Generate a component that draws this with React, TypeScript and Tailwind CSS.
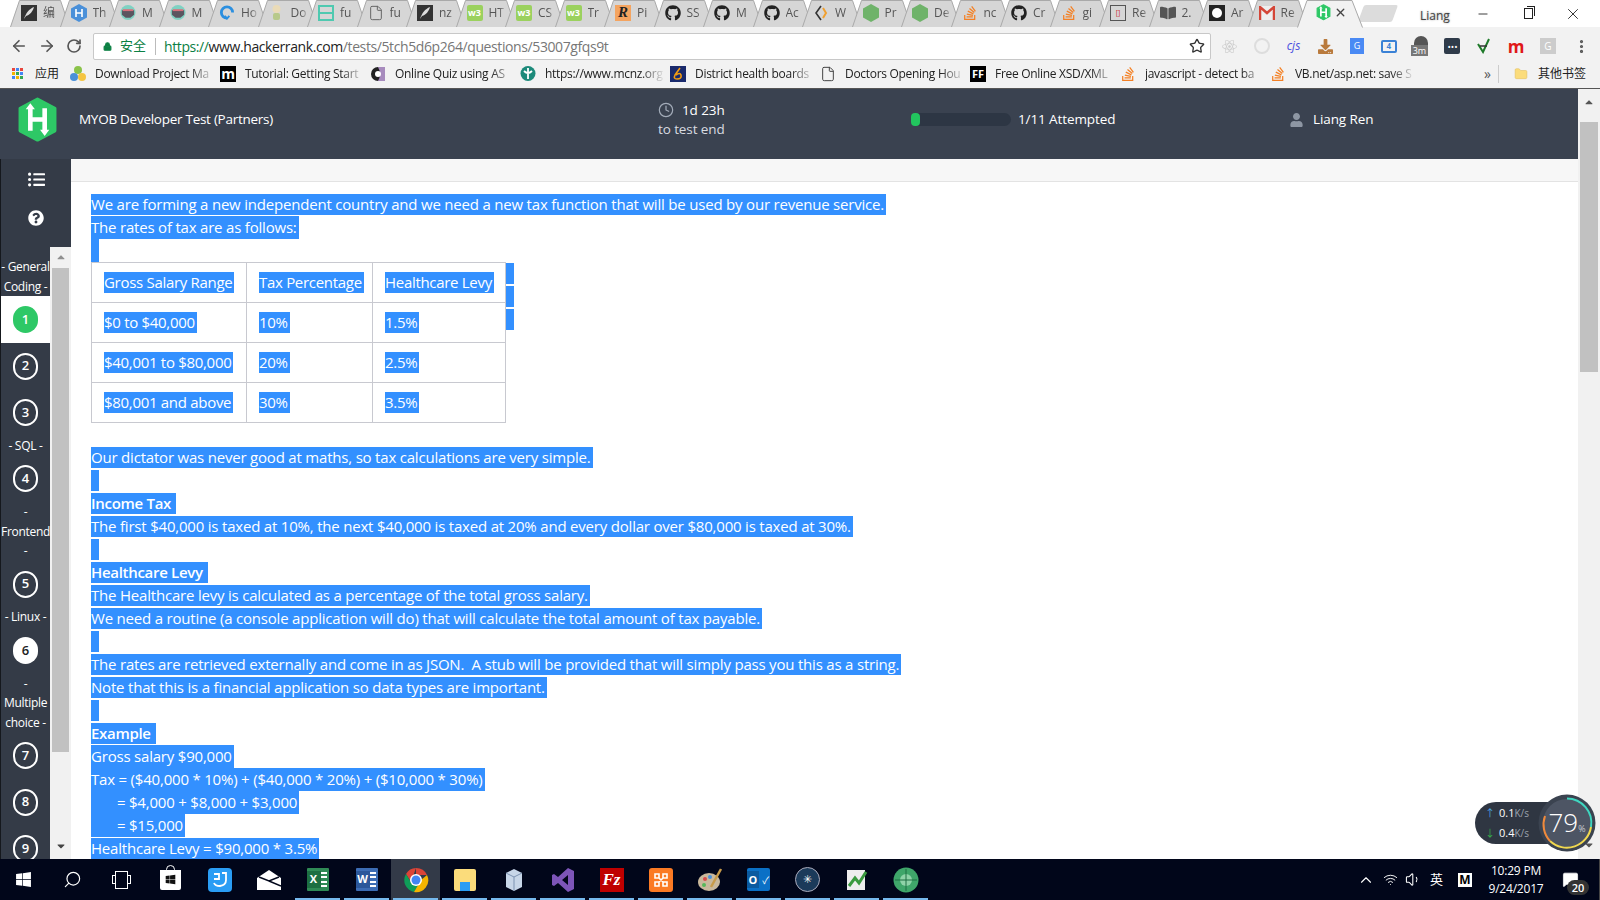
import type { ReactNode } from 'react';
import { ArrowLeft, ArrowRight, RotateCw, Star, Lock, EllipsisVertical, ChevronUp, Clock, Search, X, Minus, File, Folder, Volume1, Wifi, MessageSquare } from 'lucide-react';
import { FaGithub, FaStackOverflow, FaUser, FaWindows, FaQuestionCircle, FaListUl, FaReact, FaDownload, FaBookOpen, FaCaretUp, FaCaretDown } from 'react-icons/fa';

const SANS = "font-['Open_Sans','Noto_Sans_CJK_SC',sans-serif]";

function Box({ className, children }: { className: string; children?: ReactNode }) {
  return <span className={`flex h-4 w-4 shrink-0 items-center justify-center ${className}`}>{children}</span>;
}

function Hex({ size = 16 }: { size?: number }) {
  return (
    <svg width={size} height={size * 1.1} viewBox="0 0 40 44">
      <path d="M20 2 L37 11 V33 L20 42 L3 33 V11 Z" fill="#2ec866" stroke="#2ec866" strokeWidth="3" strokeLinejoin="round" />
      <path d="M13 11 V33 M27 11 V33 M13 22 H27" stroke="#fff" strokeWidth="4.5" fill="none" />
      <path d="M13 6 L8.500 12 H17.500 Z M27 38 L22.500 32 H31.500 Z" fill="#fff" />
    </svg>
  );
}

function Bird() {
  return (
    <Box className="bg-[#333]">
      <svg width="12" height="14" viewBox="0 0 12 14"><path d="M1 13 C3 7 6 3 11 1 C10 5 7 9 3 10 Z" fill="#ddd" /></svg>
    </Box>
  );
}

function Mask() {
  return (
    <svg width="17" height="17" viewBox="0 0 17 17">
      <circle cx="8.500" cy="8.500" r="8" fill="#7fd1c2" />
      <path d="M2 6 H15 V11 L11 14 H6 L2 11 Z" fill="#5b5560" />
      <path d="M3 5 H14 V7 H3 Z" fill="#d9707c" />
    </svg>
  );
}

function W3() {
  return <Box className="rounded-[2px] bg-[#9bd15e] text-[9px] font-bold leading-none text-white">w3</Box>;
}

function Node() {
  return (
    <svg width="16" height="18" viewBox="0 0 16 18"><path d="M8 0 L16 4.500 V13.500 L8 18 L0 13.500 V4.500 Z" fill="#6fb36a" /></svg>
  );
}

const tabs: [ReactNode, string][] = [
  [<Bird />, '编'],
  [<svg width="16" height="18" viewBox="0 0 16 18"><path d="M8 0 L16 4.500 V13.500 L8 18 L0 13.500 V4.500 Z" fill="#4a90d9" /><path d="M5 5 V13 M11 5 V13 M5 9 H11" stroke="#fff" strokeWidth="1.600" /></svg>, 'Th'],
  [<Mask />, 'M'],
  [<Mask />, 'M'],
  [<svg width="17" height="17" viewBox="0 0 17 17"><path d="M8.500 14.500 A6 6 0 1 1 14.500 8.500" stroke="#2b8fe0" strokeWidth="3" fill="none" /><path d="M6 12 L8.500 15 L11 12" stroke="#2b8fe0" strokeWidth="2" fill="none" /></svg>, 'Ho'],
  [<svg width="15" height="17" viewBox="0 0 15 17"><circle cx="7.500" cy="5" r="4" fill="#eadbb7" /><rect x="4" y="9" width="7" height="7" rx="2" fill="#b8c98a" /></svg>, 'Do'],
  [<span className="flex h-4 w-4 shrink-0 flex-col justify-center border-2 border-[#4fc9b0]"><span className="h-0.5 bg-[#4fc9b0]" /></span>, 'fu'],
  [<File className="h-4 w-4 shrink-0 text-[#666]" strokeWidth={1.500} />, 'fu'],
  [<Bird />, 'nz'],
  [<W3 />, 'HT'],
  [<W3 />, 'CS'],
  [<W3 />, 'Tr'],
  [<Box className="bg-[#f4a460] font-['Liberation_Serif',serif] text-[15px] font-bold italic leading-none text-[#222]">R</Box>, 'Pi'],
  [<FaGithub className="h-4 w-4 shrink-0 text-[#222]" />, 'SS'],
  [<FaGithub className="h-4 w-4 shrink-0 text-[#222]" />, 'M'],
  [<FaGithub className="h-4 w-4 shrink-0 text-[#222]" />, 'Ac'],
  [<svg width="16" height="16" viewBox="0 0 16 16"><path d="M8 1 L3 8 L8 15" stroke="#333" strokeWidth="1.600" fill="none" /><path d="M10 3 L13 8 L10 13" stroke="#f0a030" strokeWidth="2" fill="none" /></svg>, 'W'],
  [<Node />, 'Pr'],
  [<Node />, 'De'],
  [<FaStackOverflow className="h-4 w-4 shrink-0 text-[#f48024]" />, 'nc'],
  [<FaGithub className="h-4 w-4 shrink-0 text-[#222]" />, 'Cr'],
  [<FaStackOverflow className="h-4 w-4 shrink-0 text-[#f48024]" />, 'gi'],
  [<Box className="border border-[#555] text-[7px] leading-none text-[#c33]">[]</Box>, 'Re'],
  [<FaBookOpen className="h-4 w-4 shrink-0 text-[#555]" />, '2.'],
  [<Box className="bg-[#222]"><span className="h-2.5 w-2.5 rounded-full bg-white" /></Box>, 'Ar'],
  [<svg width="16" height="14" viewBox="0 0 16 14"><rect width="16" height="14" fill="#eee" /><path d="M1 14 V1 L8 7 L15 1 V14" stroke="#d44638" strokeWidth="2.500" fill="none" /></svg>, 'Re'],
];

const bookmarks: [ReactNode, string][] = [
  [<svg width="16" height="17" viewBox="0 0 16 17"><circle cx="8" cy="5" r="4" fill="#8bc34a" /><circle cx="4" cy="12" r="4" fill="#4a90d9" /><circle cx="12" cy="12" r="4" fill="#f5c542" /></svg>, 'Download Project Ma'],
  [<Box className="bg-black text-[14px] font-bold leading-none text-white">m</Box>, 'Tutorial: Getting Start'],
  [<svg width="16" height="16" viewBox="0 0 16 16"><circle cx="8" cy="8" r="7" fill="#222" /><path d="M8 1 H15 V15 H8 Q12 8 8 1 Z" fill="#a78bbd" /><circle cx="8" cy="8" r="3" fill="#fff" /></svg>, 'Online Quiz using AS'],
  [<svg width="16" height="17" viewBox="0 0 16 17"><circle cx="8" cy="8.500" r="7.500" fill="#1c8a7a" /><path d="M8 3 V14 M4 6 Q8 10 12 6" stroke="#fff" strokeWidth="1.800" fill="none" /></svg>, 'https://www.mcnz.org'],
  [<Box className="bg-[#1a2a6c]"><svg width="12" height="13" viewBox="0 0 12 13"><path d="M8 1 L3 8 Q1 12 5 12 Q10 12 9 8 Q8 5 4 8" stroke="#f39c12" strokeWidth="1.600" fill="none" /></svg></Box>, 'District health boards'],
  [<File className="h-4 w-4 shrink-0 text-[#444]" strokeWidth={1.500} />, 'Doctors Opening Hou'],
  [<Box className="gap-px bg-black text-[11px] font-bold leading-none text-white">FF</Box>, 'Free Online XSD/XML'],
  [<FaStackOverflow className="h-4 w-4 shrink-0 text-[#f48024]" />, 'javascript - detect ba'],
  [<FaStackOverflow className="h-4 w-4 shrink-0 text-[#f48024]" />, 'VB.net/asp.net: save S'],
];

function TabStrip() {
  return (
    <div className="relative flex h-[27px] shrink-0 bg-white pl-[10px]">
      {tabs.map(([icon, title], i) => (
        <div key={i} className="relative -mr-[10.500px] h-[27px] w-[60px] shrink-0">
          <svg className="absolute inset-0" width="60" height="27" viewBox="0 0 60 27">
            <path d="M0.500 27 L9.500 0.500 H50.500 L59.500 27" fill="#d6d6d6" stroke="#a9a9a9" />
          </svg>
          <div className="relative flex h-[27px] items-center pb-[2px] pl-[11px]">
            <span className="flex w-4 shrink-0 justify-center">{icon}</span>
            <span className="ml-[6px] w-[18px] overflow-hidden whitespace-nowrap text-[12px] text-[#555] [mask-image:linear-gradient(to_right,black_55%,transparent)]">{title}</span>
          </div>
        </div>
      ))}
      <div className="relative z-10 h-[27px] w-[66px] shrink-0">
        <svg className="absolute inset-0" width="66" height="28" viewBox="0 0 66 28">
          <path d="M0.500 27.500 L10 0.500 H55 L65.500 27.500" fill="#f2f2f2" stroke="#a9a9a9" />
        </svg>
        <div className="relative flex h-[27px] items-center pb-[2px] pl-[19px]">
          <Hex size={15} />
          <X className="ml-[3px] h-[13px] w-[13px] text-[#444]" strokeWidth={2.500} />
        </div>
      </div>
      <div className="-ml-[2px] mt-[5px] h-[17px] w-[34px] shrink-0 -skew-x-[20deg] rounded-[2px] bg-[#dcdcdc]" />
      <span className="ml-[25px] mt-[7px] text-[12px] leading-[18px] text-[#444] [text-shadow:0_0_2px_#999]">Liang</span>
      <div className="ml-[11px] flex">
        <span className="flex h-[27px] w-[45px] items-center justify-center"><Minus className="h-[14px] w-[14px] text-[#222]" strokeWidth={1.500} /></span>
        <span className="flex h-[27px] w-[45px] items-center justify-center">
          <span className="relative h-[11px] w-[9px] border border-[#222] after:absolute after:-right-[3px] after:-top-[3px] after:h-[10px] after:w-[8px] after:border-r after:border-t after:border-[#222]" />
        </span>
        <span className="flex h-[27px] w-[45px] items-center justify-center"><X className="h-[18px] w-[18px] text-[#222]" strokeWidth={1.200} /></span>
      </div>
    </div>
  );
}

function ExtIcon({ children }: { children: ReactNode }) {
  return <span className="flex h-[27px] w-[31.800px] shrink-0 items-center justify-center">{children}</span>;
}

function Toolbar() {
  return (
    <div className="flex h-[34px] shrink-0 items-center bg-[#f2f2f2] pt-[4px] text-[#555]">
      <div className="flex w-[93px] items-center pl-[10px]">
        <ArrowLeft className="h-[18px] w-[18px]" strokeWidth={2.200} />
        <ArrowRight className="ml-[10px] h-[18px] w-[18px]" strokeWidth={2.200} />
        <RotateCw className="ml-[10px] h-[16px] w-[16px]" strokeWidth={2.500} />
      </div>
      <div className="flex h-[27px] w-[1118px] items-center rounded-[2px] border border-[#c8c8c8] bg-white pl-[9px] pr-[5px] text-[14px]">
        <Lock className="h-[11px] w-[9px] fill-[#0b8043] text-[#0b8043]" strokeWidth={3} />
        <span className="ml-[8px] text-[13px] text-[#0b8043]">安全</span>
        <span className="ml-[9px] h-[17px] w-px bg-[#bbb]" />
        <span className="ml-[8px] flex-1 whitespace-nowrap tracking-[-0.4px]">
          <span className="text-[#0b8043]">https://</span>
          <span className="text-[#222]">www.hackerrank.com</span>
          <span className="text-[#777]">/tests/5tch5d6p264/questions/53007gfqs9t</span>
        </span>
        <Star className="h-4 w-4 text-[#333]" strokeWidth={2} />
      </div>
      <div className="ml-[3px] flex flex-1 items-center">
        <ExtIcon><FaReact className="h-[15px] w-[15px] text-[#ccc]" /></ExtIcon>
        <ExtIcon><span className="h-4 w-4 rounded-full border-2 border-[#ddd]" /></ExtIcon>
        <ExtIcon><span className="text-[12px] italic text-[#4b50e0]">cjs</span></ExtIcon>
        <ExtIcon><FaDownload className="h-[15px] w-[15px] text-[#b97a3c]" /></ExtIcon>
        <ExtIcon><span className="flex h-4 w-[14px] items-center justify-center bg-[#4a8af4] text-[9px] text-white">G</span></ExtIcon>
        <ExtIcon><span className="flex h-[13px] w-4 items-center justify-center rounded-[2px] border-2 border-[#3b82d6] text-[8px] font-bold leading-none text-[#3b82d6]">4</span></ExtIcon>
        <ExtIcon>
          <span className="relative block h-5 w-5">
            <span className="absolute left-[3px] top-0 h-[14px] w-[14px] rounded-t-full bg-[#555]" />
            <span className="absolute bottom-0 left-0 bg-[#777] px-[2px] text-[9px] leading-[11px] text-white">3m</span>
          </span>
        </ExtIcon>
        <ExtIcon><span className="flex h-4 w-4 items-center justify-center rounded-[2px] bg-[#2f3b4a] text-[9px] leading-none text-white">•••</span></ExtIcon>
        <ExtIcon><svg width="14" height="16" viewBox="0 0 14 16"><path d="M1 6 L6 14 L12 1" stroke="#1f7a2a" strokeWidth="2" fill="none" /><path d="M3 8 H10" stroke="#333" strokeWidth="1.500" /></svg></ExtIcon>
        <ExtIcon><span className="text-[17px] font-bold leading-none text-[#e01818]">m</span></ExtIcon>
        <ExtIcon><span className="flex h-4 w-4 items-center justify-center bg-[#ccc] text-[10px] text-white">G</span></ExtIcon>
        <EllipsisVertical className="ml-[9px] h-[17px] w-[17px] text-[#555]" strokeWidth={2.500} />
      </div>
    </div>
  );
}

function BookmarkBar() {
  return (
    <div className="flex h-[28px] shrink-0 items-center border-b border-[#555] bg-[#f2f2f2] pb-[2px] text-[12px] text-[#222]">
      <div className="ml-[12px] grid w-[11px] grid-cols-3 gap-[1px]">
        {['#e8453c', '#4285f4', '#e8453c', '#f4b400', '#34a853', '#4285f4', '#4285f4', '#f4b400', '#34a853'].map((c, i) => (
          <span key={i} className="h-[3px] w-[3px]" style={{ backgroundColor: c }} />
        ))}
      </div>
      <span className="ml-[12px] w-[35px] shrink-0">应用</span>
      {bookmarks.map(([icon, label], i) => (
        <div key={i} className="flex w-[150px] shrink-0 items-center">
          <span className="flex w-4 shrink-0 justify-center">{icon}</span>
          <span className="ml-[9px] w-[120px] overflow-hidden whitespace-nowrap tracking-[-0.3px] [mask-image:linear-gradient(to_right,black_80%,transparent)]">{label}</span>
        </div>
      ))}
      <span className="ml-[64px] w-[14px] shrink-0 text-[14px] leading-none text-[#555]">»</span>
      <span className="h-[18px] w-px shrink-0 bg-[#ccc]" />
      <Folder className="ml-[15px] h-[16px] w-[14px] shrink-0 fill-[#fbdc7b] text-[#e3c05c]" strokeWidth={1} />
      <span className="ml-[10px] whitespace-nowrap">其他书签</span>
    </div>
  );
}

function Header() {
  return (
    <div className="flex h-[70px] shrink-0 items-center bg-[#3a4250] pb-[9px] text-[13.500px] text-white">
      <div className="ml-[17px] shrink-0"><Hex size={41} /></div>
      <span className="ml-[21px] w-[579px] shrink-0 tracking-[-0.27px]">MYOB Developer Test (Partners)</span>
      <div className="w-[253px] shrink-0 leading-[19px]">
        <div className="flex items-center">
          <Clock className="h-4 w-4 text-[#a3acb9]" strokeWidth={1.800} />
          <span className="ml-[8px] tracking-[-0.1px]">1d 23h</span>
        </div>
        <div className="tracking-[-0.1px] text-[#d8dbe0]">to test end</div>
      </div>
      <div className="relative h-[13px] w-[100px] shrink-0 rounded-full bg-[#2d3644]">
        <div className="h-[13px] w-[9px] rounded-[4px] bg-[#22c55e]" />
      </div>
      <span className="ml-[7px] w-[271px] shrink-0 tracking-[-0.1px]">1/11 Attempted</span>
      <FaUser className="h-[14px] w-[15px] shrink-0 text-[#8d96a3]" />
      <span className="ml-[9px] tracking-[-0.1px]">Liang Ren</span>
    </div>
  );
}

type Step = { label: string[] } | { n: number; state?: 'current' | 'done' };

const steps: Step[] = [
  { label: ['- General', 'Coding -'] },
  { n: 1, state: 'current' },
  { n: 2 },
  { n: 3 },
  { label: ['- SQL -'] },
  { n: 4 },
  { label: ['-', 'Frontend', '-'] },
  { n: 5 },
  { label: ['- Linux -'] },
  { n: 6, state: 'done' },
  { label: ['-', 'Multiple', 'choice -'] },
  { n: 7 },
  { n: 8 },
  { n: 9 },
];

function Sidebar() {
  return (
    <div className="flex w-[71px] shrink-0 flex-col overflow-hidden border-l border-[#15181d] bg-[#343b47]">
      <div className="flex h-[88px] shrink-0 flex-col items-center gap-[22px] pt-[12px] text-white">
        <FaListUl className="h-[17px] w-[17px]" />
        <FaQuestionCircle className="h-[16px] w-[16px]" />
      </div>
      <div className="flex min-h-0 flex-1">
        <div className="w-[49px] shrink-0 overflow-hidden pt-[10px] text-center text-[12px] leading-[19.500px] text-white">
          {steps.map((s, i) =>
            'label' in s ? (
              <div key={i}>
                {s.label.map((l, j) => (
                  <div key={j} className="whitespace-nowrap tracking-[-0.3px]">{l}</div>
                ))}
              </div>
            ) : (
              <div key={i} className={`flex h-[46.700px] items-center justify-center ${s.state === 'current' ? 'bg-white' : ''}`}>
                <span
                  className={`flex h-[27px] w-[25px] items-center justify-center rounded-full text-[13px] font-semibold ${
                    s.state === 'current' ? 'bg-[#2ec866] text-white' : s.state === 'done' ? 'bg-white text-[#222]' : 'border-2 border-white text-white'
                  }`}
                >
                  {s.n}
                </span>
              </div>
            ),
          )}
        </div>
        <div className="flex w-[21px] shrink-0 flex-col items-center bg-[#f1f1f1] text-[#8f8f8f]">
          <FaCaretUp className="mt-[4px] h-[12px] w-[12px] shrink-0" />
          <div className="mt-[5px] h-[484px] w-[17px] shrink-0 bg-[#c1c1c1]" />
          <FaCaretDown className="mt-[88px] h-[12px] w-[12px] shrink-0 text-[#444]" />
        </div>
      </div>
    </div>
  );
}

function Sel({ children, className = '' }: { children?: ReactNode; className?: string }) {
  return <span className={`inline-block whitespace-pre bg-[#3390ff] pr-[2px] align-top text-white ${className}`}>{children}</span>;
}

// the browser's selection paint is not even: some lines fill the whole line box
function Line({ children, bold, tall }: { children?: ReactNode; bold?: boolean; tall?: boolean }) {
  const size = tall ? 'h-[23px] leading-[23px]' : 'h-[21px] leading-[21px]';
  return (
    <div className={`h-[23px] ${tall ? '' : 'pt-px'}`}>
      {children ? (
        <Sel className={`${size} ${bold ? 'pr-[5px] font-semibold tracking-[-0.3px]' : ''}`}>{children}</Sel>
      ) : (
        <Sel className={`${size} w-[8px]`} />
      )}
    </div>
  );
}

const taxRows = [
  ['Gross Salary Range', 'Tax Percentage', 'Healthcare Levy'],
  ['$0 to $40,000', '10%', '1.5%'],
  ['$40,001 to $80,000', '20%', '2.5%'],
  ['$80,001 and above', '30%', '3.5%'],
];

function Article() {
  return (
    <div className="min-h-0 flex-1 overflow-hidden pl-[20px] pt-[10.500px] text-[15px] tracking-[-0.2px]">
      <Line>We are forming a new independent country and we need a new tax function that will be used by our revenue service.</Line>
      <Line tall>The rates of tax are as follows:</Line>
      <Line tall />
      <div className="flex items-start">
        <table className="w-[414px] table-fixed border-collapse tracking-[-0.3px]">
          <colgroup>
            <col className="w-[155px]" />
            <col className="w-[126px]" />
            <col className="w-[133px]" />
          </colgroup>
          <tbody>
            {taxRows.map((row) => (
              <tr key={row[0]} className="h-[40px]">
                {row.map((c) => (
                  <td key={c} className="border border-[#c8c9d0] px-[12px] pb-0 pt-[2px] align-middle">
                    <Sel className="h-[21px] leading-[21px]">{c}</Sel>
                  </td>
                ))}
              </tr>
            ))}
          </tbody>
        </table>
        <div className="flex flex-col gap-[2px] pt-px">
          <span className="h-[21px] w-[8px] bg-[#3390ff]" />
          <span className="h-[21px] w-[8px] bg-[#3390ff]" />
          <span className="h-[21px] w-[8px] bg-[#3390ff]" />
        </div>
      </div>
      <div className="mt-[23px]">
        <Line>Our dictator was never good at maths, so tax calculations are very simple.</Line>
        <Line />
        <Line bold>Income Tax</Line>
        <Line>The first $40,000 is taxed at 10%, the next $40,000 is taxed at 20% and every dollar over $80,000 is taxed at 30%.</Line>
        <Line />
        <Line bold>Healthcare Levy</Line>
        <Line>The Healthcare levy is calculated as a percentage of the total gross salary.</Line>
        <Line>We need a routine (a console application will do) that will calculate the total amount of tax payable.</Line>
        <Line />
        <Line>The rates are retrieved externally and come in as JSON.  A stub will be provided that will simply pass you this as a string.</Line>
        <Line>Note that this is a financial application so data types are important.</Line>
        <Line />
        <Line bold>Example</Line>
        <Line tall>Gross salary $90,000</Line>
        <Line tall>Tax = ($40,000 * 10%) + ($40,000 * 20%) + ($10,000 * 30%)</Line>
        <Line tall>       = $4,000 + $8,000 + $3,000</Line>
        <Line tall>       = $15,000</Line>
        <Line>Healthcare Levy = $90,000 * 3.5%</Line>
      </div>
    </div>
  );
}

function Chrome() {
  return (
    <svg width="26" height="26" viewBox="0 0 26 26">
      <path d="M13 1 A12 12 0 0 1 24 8 H13 Z M13 1 A12 12 0 0 0 3 7 L8 15 Z" fill="#db4437" />
      <path d="M3 7 A12 12 0 0 0 11 25 L16 17 H9 Z" fill="#0f9d58" />
      <path d="M24 8 A12 12 0 0 1 11 25 L18 13 Z" fill="#f4b400" />
      <circle cx="13" cy="13" r="6" fill="#fff" />
      <circle cx="13" cy="13" r="4.500" fill="#4285f4" />
    </svg>
  );
}

function OfficeIcon({ letter, dark, light }: { letter: string; dark: string; light: string }) {
  return (
    <span className="relative flex h-[23px] w-[22px] items-center justify-end rounded-[1px]" style={{ backgroundColor: light }}>
      <span className="mr-[2px] flex h-[15px] w-[6px] flex-col justify-between">
        <span className="h-[2px] bg-white" />
        <span className="h-[2px] bg-white" />
        <span className="h-[2px] bg-white" />
        <span className="h-[2px] bg-white" />
      </span>
      <span className="absolute left-0 top-[3px] flex h-[17px] w-[14px] items-center justify-center text-[11px] font-bold text-white" style={{ backgroundColor: dark }}>{letter}</span>
    </span>
  );
}

const taskIcons: { icon: ReactNode; run?: boolean; active?: boolean }[] = [
  { icon: <FaWindows className="h-[17px] w-[17px] text-white" /> },
  { icon: <Search className="h-[19px] w-[19px] -scale-x-100 text-white" strokeWidth={1.500} /> },
  { icon: <span className="flex items-center text-white"><span className="h-[9px] w-[3px] border-y border-l border-white" /><span className="h-[18px] w-[13px] border border-white" /><span className="h-[9px] w-[3px] border-y border-r border-white" /></span> },
  { icon: <span className="relative flex h-[20px] w-[21px] items-center justify-center rounded-b-[2px] bg-white before:absolute before:-top-[5px] before:left-[6px] before:h-[6px] before:w-[9px] before:rounded-t-full before:border before:border-white"><FaWindows className="h-[11px] w-[11px] text-[#111]" /></span> },
  { icon: <span className="flex h-6 w-6 items-center justify-center rounded-[4px] bg-[#2a9df4]"><svg width="18" height="18" viewBox="0 0 18 18"><path d="M3 3 H8 V8 H3 M11 2 H15 V9 Q15 14 9 15 Q4 15 3 12" stroke="#fff" strokeWidth="1.800" fill="none" /></svg></span> },
  { icon: <svg width="24" height="20" viewBox="0 0 24 20"><path d="M0 8 L12 0 L24 8 V20 H0 Z" fill="#fff" /><path d="M2 7 L12 11 L22 7 M12 11 L24 16" stroke="#01061a" strokeWidth="1.500" fill="none" /></svg> },
  { icon: <OfficeIcon letter="X" dark="#1d6f42" light="#2f8a55" />, run: true },
  { icon: <OfficeIcon letter="W" dark="#2b579a" light="#3c6cb4" />, run: true },
  { icon: <Chrome />, run: true, active: true },
  { icon: <span className="relative block h-[22px] w-[22px] rounded-[2px] bg-[#fbdc7b]"><span className="absolute bottom-0 left-[6px] h-[9px] w-[10px] bg-[#2a9df4]" /></span>, run: true },
  { icon: <svg width="18" height="24" viewBox="0 0 18 24"><path d="M1 5 L9 1 L17 5 V19 L9 23 L1 19 Z" fill="#c7d6e8" /><path d="M1 5 L9 9 L17 5 M9 9 V23" stroke="#7c93b2" fill="none" /></svg>, run: true },
  { icon: <svg width="24" height="26" viewBox="0 0 24 26"><path d="M17 1 L23 4 V22 L17 25 L7 16 L3 19 L1 18 V8 L3 7 L7 10 Z M17 8 L11 13 L17 18 Z" fill="#7d55b8" fillRule="evenodd" /></svg>, run: true },
  { icon: <span className="flex h-6 w-6 items-center justify-center bg-[#bf0000] font-['Liberation_Serif',serif] text-[17px] font-bold italic text-white">Fz</span>, run: true },
  { icon: <span className="flex h-6 w-6 items-center justify-center rounded-[3px] bg-[#fb7a24]"><svg width="16" height="16" viewBox="0 0 16 16"><path d="M2 2 H6 V6 H2 Z M10 2 H14 V6 H10 Z M2 10 H6 V14 H2 Z M10 10 H14 V14 H10 Z M6 6 L10 10 M10 6 L6 10" stroke="#fff" strokeWidth="1.600" fill="none" /></svg></span>, run: true },
  { icon: <svg width="26" height="26" viewBox="0 0 26 26"><ellipse cx="12" cy="15" rx="11" ry="9" fill="#c9b89c" /><circle cx="8" cy="12" r="2" fill="#d94b4b" /><circle cx="13" cy="10" r="2" fill="#4a90d9" /><circle cx="7" cy="18" r="2" fill="#57b85a" /><path d="M14 20 L24 2" stroke="#c89b4a" strokeWidth="2.500" /></svg>, run: true },
  { icon: <span className="relative flex h-[23px] w-[23px] items-center justify-end rounded-[2px] bg-[#0a70c6] pr-[1px] text-[10px] leading-none text-white">✓<span className="absolute left-0 top-[3px] flex h-[17px] w-[12px] items-center justify-center bg-[#0a5aa0] text-[11px] font-bold">O</span></span>, run: true },
  { icon: <span className="flex h-[25px] w-[25px] items-center justify-center rounded-full border border-[#aab] bg-[#1b3a5a] text-[11px] text-white">✳</span>, run: true },
  { icon: <svg width="24" height="24" viewBox="0 0 24 24"><path d="M2 2 H20 V22 H2 Z" fill="#eee" /><path d="M4 18 L10 10 L14 15 L21 4" stroke="#3a9a3f" strokeWidth="3" fill="none" /></svg>, run: true },
  { icon: <svg width="26" height="26" viewBox="0 0 26 26"><circle cx="13" cy="13" r="12.500" fill="#3fa66a" /><circle cx="13" cy="13" r="6" fill="#8fd3a8" /><path d="M2 13 H24 M13 2 V24" stroke="#1e6e43" /></svg>, run: true },
];

function Taskbar() {
  return (
    <div className="flex h-[41px] shrink-0 items-stretch bg-[#01061a] text-white">
      <div className="-ml-[1px] flex">
        {taskIcons.map((t, i) => (
          <div key={i} className={`relative flex w-[49px] shrink-0 items-center justify-center ${t.active ? 'bg-[#333a48]' : ''}`}>
            {t.icon}
            {t.run && <span className="absolute bottom-0 left-[2px] right-[2px] h-[2px] bg-[#76b9ed]" />}
          </div>
        ))}
      </div>
      <div className="ml-auto flex items-center border-r border-[#444]">
        <ChevronUp className="h-[18px] w-[18px]" strokeWidth={1.500} />
        <Wifi className="ml-[8px] h-[15px] w-[15px]" strokeWidth={1.500} />
        <Volume1 className="ml-[7px] h-[17px] w-[17px]" strokeWidth={1.500} />
        <span className="ml-[8px] text-[13px]">英</span>
        <span className="ml-[15px] flex h-[14px] w-[14px] items-center justify-center bg-white text-[12px] font-bold leading-none text-black">M</span>
        <div className="ml-[11px] w-[66px] text-center text-[12px] leading-[18px] tracking-[-0.2px]">
          <div>10:29 PM</div>
          <div>9/24/2017</div>
        </div>
        <div className="relative ml-[13px] mr-[9px] w-[28px]">
          <MessageSquare className="h-[17px] w-[17px] fill-white" strokeWidth={1} />
          <span className="absolute -bottom-[7px] left-[5px] flex h-[15px] w-[22px] items-center justify-center rounded-full bg-[#333] text-[11px] font-semibold leading-none">20</span>
        </div>
      </div>
    </div>
  );
}

function SpeedWidget() {
  return (
    <div className="absolute left-[1475px] top-[794px] flex items-center">
      <div className="flex h-[42px] w-[90px] flex-col justify-center rounded-l-full bg-[#2f3642] pl-[10px] text-[10px] leading-[20px] text-white">
        <div><span className="text-[#4aa8e8]">↑</span><span className="ml-[4px] text-[11px]">0.1</span><span className="text-[#9aa2ad]">K/s</span></div>
        <div><span className="text-[#35b04a]">↓</span><span className="ml-[4px] text-[11px]">0.4</span><span className="text-[#9aa2ad]">K/s</span></div>
      </div>
      <div className="relative -ml-[1px] h-[58px] w-[58px] -translate-x-[26px]">
        <svg width="58" height="58" viewBox="0 0 58 58" className="absolute inset-0">
          <circle cx="29" cy="29" r="28.500" fill="#3b4350" />
          <circle cx="29" cy="29" r="24" fill="#4d5564" />
          <path d="M29 4.500 A24.500 24.500 0 0 1 53 33" stroke="#3fd6c0" strokeWidth="2" fill="none" />
          <path d="M53 33 A24.500 24.500 0 0 1 12 47" stroke="#f0d850" strokeWidth="2" fill="none" />
          <path d="M12 47 A24.500 24.500 0 0 1 7 22" stroke="#f08a3c" strokeWidth="2" fill="none" />
        </svg>
        <div className="absolute inset-0 flex items-baseline justify-center pt-[11px] font-light text-white">
          <span className="text-[26px] leading-[34px]">79</span>
          <span className="text-[9px]">%</span>
        </div>
      </div>
    </div>
  );
}

export default function App() {
  return (
    <div className={`relative flex h-[900px] w-[1600px] flex-col overflow-hidden bg-white ${SANS}`}>
      <TabStrip />
      <Toolbar />
      <BookmarkBar />
      <div className="flex min-h-0 flex-1">
        <div className="flex min-w-0 flex-1 flex-col">
          <Header />
          <div className="flex min-h-0 flex-1">
            <Sidebar />
            <div className="flex min-w-0 flex-1 flex-col bg-white">
              <div className="h-[23px] shrink-0 border-b border-[#e3e3e3] bg-[#f7f7f7]" />
              <Article />
            </div>
          </div>
        </div>
        <div className="flex w-[22px] shrink-0 flex-col items-center bg-[#f1f1f1] text-[#555]">
          <FaCaretUp className="mt-[7px] h-[12px] w-[12px] shrink-0" />
          <div className="mt-[14px] h-[250px] w-[18px] shrink-0 bg-[#c1c1c1]" />
          <FaCaretDown className="mt-[467px] h-[12px] w-[12px] shrink-0" />
        </div>
      </div>
      <Taskbar />
      <SpeedWidget />
    </div>
  );
}
